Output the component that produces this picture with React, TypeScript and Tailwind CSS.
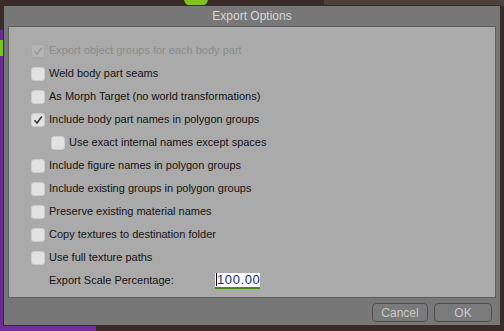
import { FC } from "react";

interface Option {
  label: string;
  checked?: boolean;
  disabled?: boolean;
  indent?: boolean;
}

const options: Option[] = [
  { label: "Export object groups for each body part", checked: true, disabled: true },
  { label: "Weld body part seams" },
  { label: "As Morph Target (no world transformations)" },
  { label: "Include body part names in polygon groups", checked: true },
  { label: "Use exact internal names except spaces", indent: true },
  { label: "Include figure names in polygon groups" },
  { label: "Include existing groups in polygon groups" },
  { label: "Preserve existing material names" },
  { label: "Copy textures to destination folder" },
  { label: "Use full texture paths" },
];

const Check: FC<{ checked?: boolean; disabled?: boolean }> = ({ checked, disabled }) => (
  <div
    className={`w-[14px] h-[14px] rounded-[3px] flex items-center justify-center ${
      disabled ? "bg-[#b4b4b4] border border-[#a6a6a6]" : "bg-[#e2e2e2] border border-[#cccccc]"
    }`}
  >
    {checked && (
      <svg width="10" height="10" viewBox="0 0 10 10">
        <path
          d="M1.5 5.2 L4 8 L8.8 1.5"
          fill="none"
          stroke={disabled ? "#9a9a9a" : "#3a3a3a"}
          strokeWidth="1.6"
        />
      </svg>
    )}
  </div>
);

const App: FC = () => {
  return (
    <div
      className="relative w-[504px] h-[331px] overflow-hidden bg-[#3a2a29] pt-[5px] pl-[3px]"
      style={{ fontFamily: '"Liberation Sans", Arial, sans-serif' }}
    >
      {/* background scene bits */}
      <div className="absolute left-[184px] top-[-8px] w-[24px] h-[14px] rounded-full bg-[#7fc31c]" />
      <div className="absolute left-0 top-[30px] w-[4px] h-[300px] bg-[#6a2b95]" />
      <div className="absolute left-0 top-[40px] w-[4px] h-[16px] bg-[#7fc31c]" />
      <div className="absolute left-0 bottom-0 w-[96px] h-[6px] bg-[#6e2f9a]" />
      <div className="absolute right-0 top-0 w-[180px] h-[6px] bg-[#4e403a]" />

      <div className="relative w-[498px] h-[321px] border border-[#2e2e2e] bg-[#777777] flex flex-col">
        <div className="h-[20px] flex items-center justify-center text-[12px] text-[#d6d6d6]">
          Export Options
        </div>
        <div className="mx-[4px] h-[272px] border border-[#5e5e5e] bg-[#aaaaaa] pt-[12px] pl-[22px]">
          {options.map((o, i) => (
            <div
              key={i}
              className={`h-[23px] flex items-center gap-[4px] ${o.indent ? "pl-[20px]" : ""}`}
            >
              <Check checked={o.checked} disabled={o.disabled} />
              <span
                className={`text-[11px] ${o.disabled ? "text-[#8c8c8c]" : "text-[#141414]"}`}
              >
                {o.label}
              </span>
            </div>
          ))}
          <div className="h-[23px] flex items-center pl-[18px]">
            <span className="text-[11px] text-[#141414] w-[166px]">Export Scale Percentage:</span>
            <div className="w-[45px] h-[16px] bg-white border-b-2 border-[#4d8a1e] overflow-hidden flex items-center">
              <span className="w-px h-[13px] bg-black ml-[1px] shrink-0" />
              <span className="text-[13px] leading-none tracking-[0.6px] text-[#1a2a78] whitespace-nowrap">100.00</span>
            </div>
          </div>
        </div>
        <div className="flex justify-end gap-[6px] pr-[8px] pt-[5px]">
          <button className="w-[56px] h-[19px] rounded-[4px] border border-[#4e4e4e] bg-[#7a7a7a] text-[12px] text-[#c9c9c9]">
            Cancel
          </button>
          <button className="w-[58px] h-[19px] rounded-[4px] border border-[#4e4e4e] bg-[#7a7a7a] text-[12px] text-[#c9c9c9]">
            OK
          </button>
        </div>
      </div>
    </div>
  );
};

export default App;
